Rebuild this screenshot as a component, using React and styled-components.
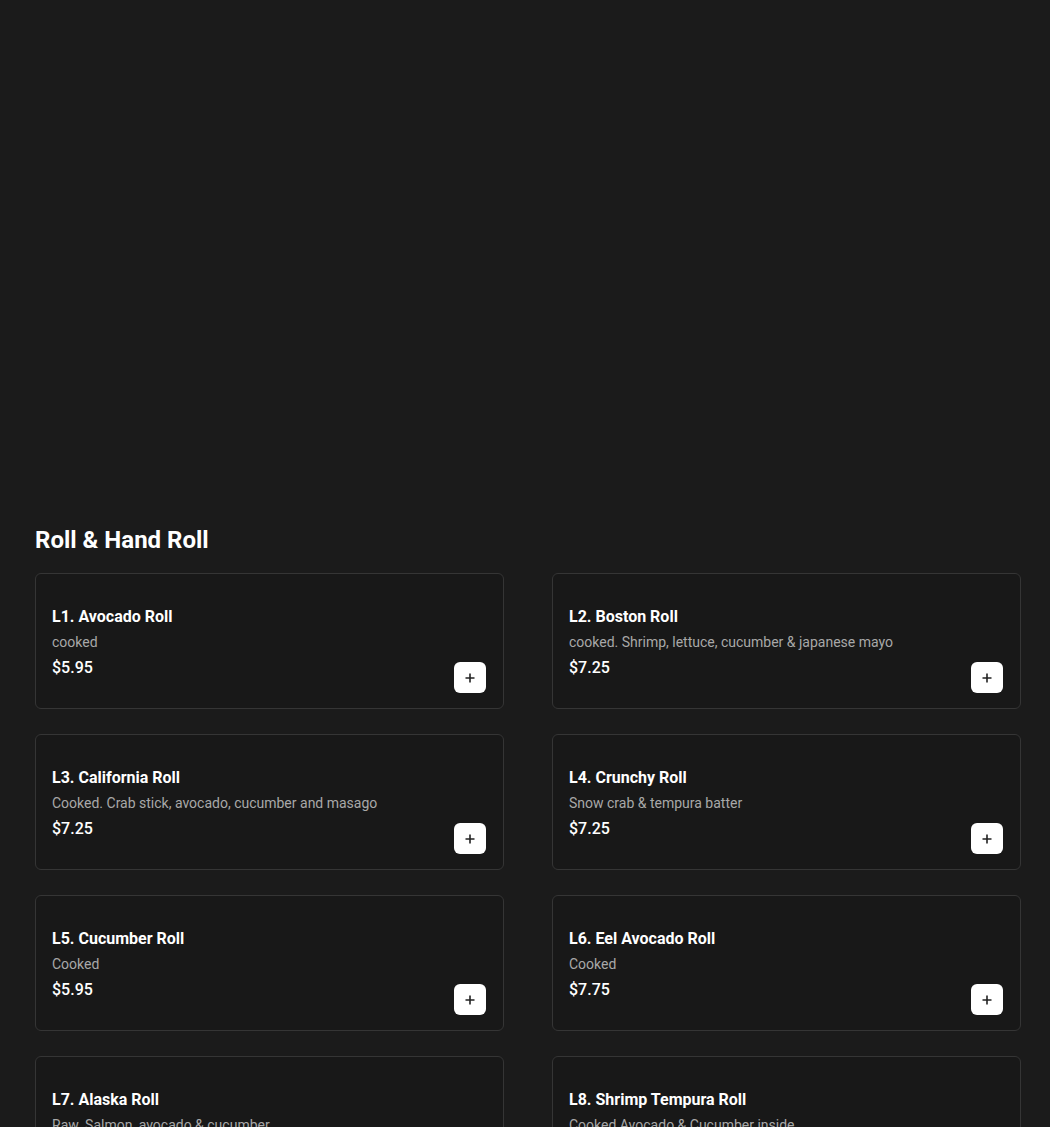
import React from "react";
import styled, { createGlobalStyle } from "styled-components";

const GlobalStyle = createGlobalStyle`
  html, body {
    margin: 0;
    padding: 0;
    background: #1b1b1b;
    color: #fff;
    font-family: Roboto, "Liberation Sans", Arial, sans-serif;
  }
`;

const items = [
  { code: "L1", name: "Avocado Roll", desc: "cooked", price: "5.95" },
  { code: "L2", name: "Boston Roll", desc: "cooked. Shrimp, lettuce, cucumber & japanese mayo", price: "7.25" },
  { code: "L3", name: "California Roll", desc: "Cooked. Crab stick, avocado, cucumber and masago", price: "7.25" },
  { code: "L4", name: "Crunchy Roll", desc: "Snow crab & tempura batter", price: "7.25" },
  { code: "L5", name: "Cucumber Roll", desc: "Cooked", price: "5.95" },
  { code: "L6", name: "Eel Avocado Roll", desc: "Cooked", price: "7.75" },
  { code: "L7", name: "Alaska Roll", desc: "Raw. Salmon, avocado & cucumber", price: "7.25" },
  { code: "L8", name: "Shrimp Tempura Roll", desc: "Cooked Avocado & Cucumber inside", price: "7.95" }
];

const Page = styled.div`
  padding: 0 29px 0 35px;
`;

const Hero = styled.div`
  height: 524px;
`;

const Heading = styled.h2`
  margin: 0 0 17px;
  font-size: 24px;
  line-height: 32px;
  font-weight: 700;
  color: #fff;
`;

const Grid = styled.div`
  display: grid;
  grid-template-columns: 1fr 1fr;
  column-gap: 48px;
  row-gap: 25px;
`;

const Card = styled.div`
  box-sizing: border-box;
  height: 136px;
  display: flex;
  align-items: center;
  gap: 12px;
  padding: 16px 17px 16px 16px;
  background: #181818;
  border: 1px solid #353535;
  border-radius: 6px;
`;

const Info = styled.div`
  flex: 1;
  display: flex;
  flex-direction: column;
  padding-top: 2px;
`;

const Title = styled.div`
  font-size: 16px;
  line-height: 24px;
  font-weight: 700;
  color: #fff;
`;

const Desc = styled.div`
  margin-top: 3px;
  font-size: 14px;
  line-height: 20px;
  color: #a8a8a8;
  white-space: nowrap;
`;

const Price = styled.div`
  margin-top: 4px;
  font-size: 16px;
  line-height: 24px;
  font-weight: 500;
  color: #fff;
`;

const AddButton = styled.button`
  align-self: flex-end;
  width: 32px;
  height: 31px;
  margin-bottom: -1px;
  padding: 0;
  border: none;
  border-radius: 6px;
  background: #fff;
  color: #222;
  display: flex;
  align-items: center;
  justify-content: center;
  cursor: pointer;
`;

const PlusIcon = () => (
  <svg width="12" height="12" viewBox="0 0 12 12" fill="none">
    <path d="M6 1.5v9M1.5 6h9" stroke="#222" strokeWidth="1.6" />
  </svg>
);

export default function App() {
  return (
    <>
      <GlobalStyle />
      <Page>
        <Hero />
        <Heading>Roll &amp; Hand Roll</Heading>
        <Grid>
          {items.map(item => (
            <Card key={item.code}>
              <Info>
                <Title>
                  {item.code}. {item.name}
                </Title>
                <Desc>{item.desc}</Desc>
                <Price>${item.price}</Price>
              </Info>
              <AddButton aria-label="Add">
                <PlusIcon />
              </AddButton>
            </Card>
          ))}
        </Grid>
      </Page>
    </>
  );
}
